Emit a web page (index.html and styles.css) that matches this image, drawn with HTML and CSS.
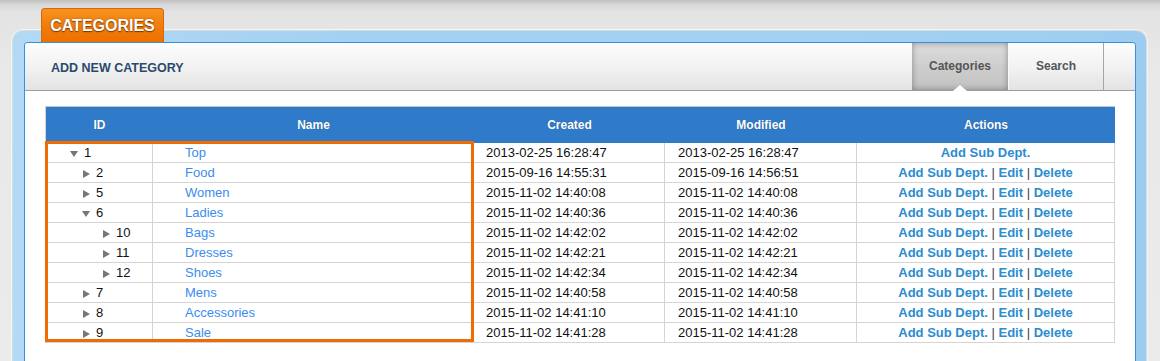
FILE: index.html
```html
<!DOCTYPE html>
<html lang="en">
<head>
<meta charset="utf-8">
<title>Categories</title>
<link rel="stylesheet" href="styles.css">
</head>
<body>
<div class="page">
  <div class="tab">CATEGORIES</div>
  <div class="frame">
    <div class="panel">
      <div class="panel-head">
        <h2 class="title">ADD NEW CATEGORY</h2>
        <nav class="tabs">
          <a class="tabs-item is-active">Categories</a>
          <a class="tabs-item">Search</a>
        </nav>
      </div>
      <div class="panel-body">
        <div class="grid-wrap">
          <table class="grid">
            <colgroup>
              <col class="c-id"><col class="c-name"><col class="c-created"><col class="c-modified"><col class="c-actions">
            </colgroup>
            <thead>
              <tr><th>ID</th><th>Name</th><th>Created</th><th>Modified</th><th>Actions</th></tr>
            </thead>
            <tbody>
              <tr>
                <td class="id lvl0"><span class="tri down"></span>1</td>
                <td class="name"><a>Top</a></td>
                <td class="date">2013-02-25 16:28:47</td>
                <td class="date">2013-02-25 16:28:47</td>
                <td class="actions"><a>Add Sub Dept.</a></td>
              </tr>
              <tr>
                <td class="id lvl1"><span class="tri right"></span>2</td>
                <td class="name"><a>Food</a></td>
                <td class="date">2015-09-16 14:55:31</td>
                <td class="date">2015-09-16 14:56:51</td>
                <td class="actions"><a>Add Sub Dept.</a> <span class="sep">|</span> <a>Edit</a> <span class="sep">|</span> <a>Delete</a></td>
              </tr>
              <tr>
                <td class="id lvl1"><span class="tri right"></span>5</td>
                <td class="name"><a>Women</a></td>
                <td class="date">2015-11-02 14:40:08</td>
                <td class="date">2015-11-02 14:40:08</td>
                <td class="actions"><a>Add Sub Dept.</a> <span class="sep">|</span> <a>Edit</a> <span class="sep">|</span> <a>Delete</a></td>
              </tr>
              <tr>
                <td class="id lvl1"><span class="tri down"></span>6</td>
                <td class="name"><a>Ladies</a></td>
                <td class="date">2015-11-02 14:40:36</td>
                <td class="date">2015-11-02 14:40:36</td>
                <td class="actions"><a>Add Sub Dept.</a> <span class="sep">|</span> <a>Edit</a> <span class="sep">|</span> <a>Delete</a></td>
              </tr>
              <tr>
                <td class="id lvl2"><span class="tri right"></span>10</td>
                <td class="name"><a>Bags</a></td>
                <td class="date">2015-11-02 14:42:02</td>
                <td class="date">2015-11-02 14:42:02</td>
                <td class="actions"><a>Add Sub Dept.</a> <span class="sep">|</span> <a>Edit</a> <span class="sep">|</span> <a>Delete</a></td>
              </tr>
              <tr>
                <td class="id lvl2"><span class="tri right"></span>11</td>
                <td class="name"><a>Dresses</a></td>
                <td class="date">2015-11-02 14:42:21</td>
                <td class="date">2015-11-02 14:42:21</td>
                <td class="actions"><a>Add Sub Dept.</a> <span class="sep">|</span> <a>Edit</a> <span class="sep">|</span> <a>Delete</a></td>
              </tr>
              <tr>
                <td class="id lvl2"><span class="tri right"></span>12</td>
                <td class="name"><a>Shoes</a></td>
                <td class="date">2015-11-02 14:42:34</td>
                <td class="date">2015-11-02 14:42:34</td>
                <td class="actions"><a>Add Sub Dept.</a> <span class="sep">|</span> <a>Edit</a> <span class="sep">|</span> <a>Delete</a></td>
              </tr>
              <tr>
                <td class="id lvl1"><span class="tri right"></span>7</td>
                <td class="name"><a>Mens</a></td>
                <td class="date">2015-11-02 14:40:58</td>
                <td class="date">2015-11-02 14:40:58</td>
                <td class="actions"><a>Add Sub Dept.</a> <span class="sep">|</span> <a>Edit</a> <span class="sep">|</span> <a>Delete</a></td>
              </tr>
              <tr>
                <td class="id lvl1"><span class="tri right"></span>8</td>
                <td class="name"><a>Accessories</a></td>
                <td class="date">2015-11-02 14:41:10</td>
                <td class="date">2015-11-02 14:41:10</td>
                <td class="actions"><a>Add Sub Dept.</a> <span class="sep">|</span> <a>Edit</a> <span class="sep">|</span> <a>Delete</a></td>
              </tr>
              <tr>
                <td class="id lvl1"><span class="tri right"></span>9</td>
                <td class="name"><a>Sale</a></td>
                <td class="date">2015-11-02 14:41:28</td>
                <td class="date">2015-11-02 14:41:28</td>
                <td class="actions"><a>Add Sub Dept.</a> <span class="sep">|</span> <a>Edit</a> <span class="sep">|</span> <a>Delete</a></td>
              </tr>
            </tbody>
          </table>
          <div class="highlight"></div>
        </div>
      </div>
    </div>
  </div>
</div>
</body>
</html>
```
FILE: styles.css
```css
* { box-sizing: border-box; }

html, body { margin: 0; padding: 0; }

body {
  font-family: "Liberation Sans", Arial, Helvetica, sans-serif;
  background: linear-gradient(#c0c0c0 0, #d9d9d9 5px, #e3e3e3 12px, #e8e8e8 60px, #ebebeb 100%);
  height: 361px;
  overflow: hidden;
}

.page {
  padding: 8px 0 0 12px;
}

.tab {
  position: relative;
  z-index: 2;
  width: 123px;
  height: 34px;
  margin-left: 29px;
  margin-bottom: -12px;
  border: 1px solid #d6680c;
  border-bottom: 0;
  border-radius: 4px 4px 0 0;
  background: linear-gradient(#f8921f, #f07a08 60%, #ee7000);
  color: #fff;
  font-weight: bold;
  font-size: 16px;
  line-height: 33px;
  text-align: center;
  text-shadow: 0 1px 1px rgba(90, 35, 0, 0.75), 0 0 2px rgba(90, 35, 0, 0.45);
}

.frame {
  width: 1135px;
  border: 1px solid #d4dde3;
  border-bottom: 0;
  border-radius: 11px 11px 0 0;
  background: linear-gradient(90deg, #b2daf5, #a3d1f1 30%, #a3d1f1 70%, #9ccdf0);
  padding: 11px 10px 0 11px;
  box-shadow: 0 0 0 1px #f4f4f4;
}

.panel {
  border: 1px solid #3a8fdc;
  border-bottom: 0;
  border-radius: 4px 4px 0 0;
  background: #fff;
}

.panel-head {
  display: flex;
  align-items: stretch;
  height: 48px;
  border-bottom: 1px solid #9c9c9c;
  background: linear-gradient(#fdfdfd, #f1f1f1 55%, #e3e3e3);
  border-radius: 3px 3px 0 0;
}

.title {
  margin: 0;
  align-self: center;
  padding: 2px 0 0 26px;
  font-size: 12.5px;
  font-weight: bold;
  color: #2a4a6c;
  letter-spacing: 0;
}

.tabs {
  display: flex;
  margin-left: auto;
  margin-right: 31px;
}

.tabs-item {
  position: relative;
  display: flex;
  align-items: center;
  justify-content: center;
  width: 96px;
  font-size: 12px;
  font-weight: bold;
  color: #555;
  padding-bottom: 2px;
}

.tabs-item + .tabs-item {
  border-left: 1px solid #fafafa;
  border-right: 1px solid #a5a5a5;
  width: 96px;
}

.tabs-item.is-active {
  background: linear-gradient(#dcdcdc, #cbcbcb 60%, #c2c2c2);
  box-shadow: inset 0 0 6px rgba(0, 0, 0, 0.35);
  color: #555;
}

.tabs-item.is-active::after {
  content: "";
  position: absolute;
  left: 50%;
  bottom: -1px;
  margin-left: -7px;
  border-left: 7px solid transparent;
  border-right: 7px solid transparent;
  border-bottom: 6px solid #fff;
}

.panel-body {
  padding: 15px 21px 40px 20px;
}

.grid-wrap {
  position: relative;
}

.grid {
  width: 1069px;
  table-layout: fixed;
  border-collapse: separate;
  border-spacing: 0;
  border-top: 1px solid #c6c6c6;
  border-left: 1px solid #d4d4d4;
  font-size: 13px;
  color: #111;
}

.c-id { width: 107px; }
.c-name { width: 321px; }
.c-created { width: 191px; }
.c-modified { width: 192px; }
.c-actions { width: 258px; }

.grid th {
  height: 36px;
  background: #307bc9;
  color: #fff;
  font-size: 12px;
  font-weight: bold;
  text-align: center;
  text-shadow: 0 0 1px rgba(0, 0, 0, 0.35);
  padding: 0 0 1px;
}

.grid td {
  height: 20px;
  padding: 0;
  border-right: 1px solid #d4d4d4;
  border-bottom: 1px solid #d4d4d4;
  white-space: nowrap;
  line-height: 19px;
}

.grid .id { padding-left: 24px; }
.grid .id.lvl1 { padding-left: 36px; }
.grid .id.lvl2 { padding-left: 56px; }

.tri {
  display: inline-block;
  width: 8px;
  height: 8px;
  margin-right: 6px;
  position: relative;
  vertical-align: -1px;
}

.tri::before {
  content: "";
  position: absolute;
}

.tri.down::before {
  left: 0;
  top: 1px;
  border-left: 4px solid transparent;
  border-right: 4px solid transparent;
  border-top: 6px solid #777;
}

.tri.right::before {
  left: 1px;
  top: 0;
  border-top: 4px solid transparent;
  border-bottom: 4px solid transparent;
  border-left: 7px solid #777;
}

.grid .name { padding-left: 32px; }
.grid .name a { color: #3b8cf0; }

.grid .date { padding-left: 12px; }
.grid .date + .date { padding-left: 13px; }

.grid .actions {
  text-align: center;
  font-weight: bold;
  color: #2b8ccf;
}

.grid .actions .sep {
  font-weight: normal;
  color: #444;
}

.highlight {
  position: absolute;
  left: 0;
  top: 35px;
  width: 429px;
  height: 201px;
  border: 3px solid #f06c00;
  pointer-events: none;
}
```
